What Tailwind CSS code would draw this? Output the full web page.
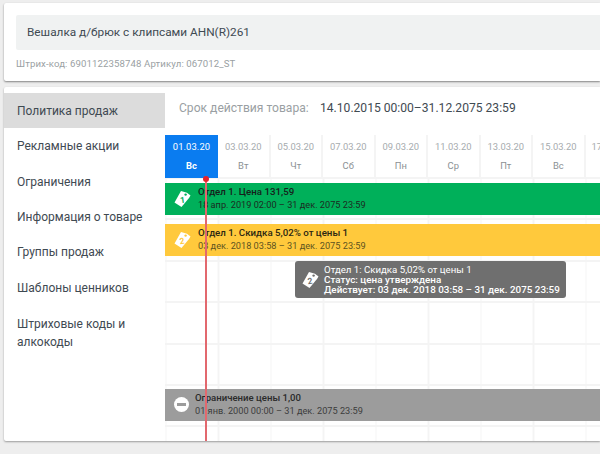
<!DOCTYPE html>
<html lang="ru"><head><meta charset="utf-8">
<script src="https://cdn.jsdelivr.net/npm/@tailwindcss/browser@4"></script>
</head>
<body class="m-0 w-[600px] h-[454px] overflow-hidden bg-[#eeeeee] font-['Roboto',sans-serif] text-[#3f4a52]">
<div class="pl-[4px] pt-[3px]">
  <section class="h-[78px] bg-white rounded-l-[2px] shadow-[0_1px_2px_rgba(0,0,0,0.45)] pl-[12px] pt-[12px]">
    <div class="h-[35px] bg-[#f0f2f2] pl-[11px] flex items-center text-[11.8px] rounded-l-[2px]">Вешалка д/брюк с клипсами AHN(R)261</div>
    <div class="mt-[7px] text-[9.65px] leading-[14px] text-[#9a9fa3] tracking-[0.1px]">Штрих-код: 6901122358748 Артикул: 067012_ST</div>
  </section>
  <section class="mt-[6px] h-[354px] bg-white rounded-l-[2px] shadow-[0_1px_2px_rgba(0,0,0,0.35)] flex">
    <nav class="w-[161px] shrink-0 pt-[6px] text-[12px]">
      <div class="h-[35px] bg-[#dcdcdc] pl-[13px] flex items-center">Политика продаж</div>
      <div class="h-[36px] pl-[13px] flex items-center">Рекламные акции</div>
      <div class="h-[35.4px] pl-[13px] flex items-center">Ограничения</div>
      <div class="h-[35.4px] pl-[13px] flex items-center">Информация о товаре</div>
      <div class="h-[35.4px] pl-[13px] flex items-center">Группы продаж</div>
      <div class="h-[35.4px] pl-[13px] flex items-center">Шаблоны ценников</div>
      <div class="pl-[13px] pt-[9px] leading-[18px] pr-[20px]">Штриховые коды и алкокоды</div>
    </nav>
    <main class="relative flex-1 min-w-0 overflow-hidden">
      <div class="h-[48px] flex items-center pl-[14px] pb-[6px] text-[12.1px]">
        <span class="text-[#9a9fa3] w-[141px]">Срок действия товара:</span>
        <span class="text-[#3f4a52]">14.10.2015 00:00–31.12.2075 23:59</span>
      </div>
      <div class="h-[44px] flex text-center text-[9.4px] text-[#a6abae] w-[600px] border-b-2 border-[#f4f4f4]">
        <div class="w-[53px] shrink-0 h-[43px] bg-[#0a7cf0] text-white"><div class="pt-[5px] leading-[14px] tracking-[0.1px]">01.03.20</div><div class="mt-[5px] leading-[14px] font-bold">Вс</div></div>
        <div class="w-[52.5px] shrink-0 border-r-2 border-[#f4f4f4]"><div class="pt-[5px] leading-[14px]">03.03.20</div><div class="mt-[5px] leading-[14px] text-[#8b9094]">Вт</div></div>
        <div class="w-[52.5px] shrink-0 border-r-2 border-[#f4f4f4]"><div class="pt-[5px] leading-[14px]">05.03.20</div><div class="mt-[5px] leading-[14px] text-[#8b9094]">Чт</div></div>
        <div class="w-[52.5px] shrink-0 border-r-2 border-[#f4f4f4]"><div class="pt-[5px] leading-[14px]">07.03.20</div><div class="mt-[5px] leading-[14px] text-[#8b9094]">Сб</div></div>
        <div class="w-[52.5px] shrink-0 border-r-2 border-[#f4f4f4]"><div class="pt-[5px] leading-[14px]">09.03.20</div><div class="mt-[5px] leading-[14px] text-[#8b9094]">Пн</div></div>
        <div class="w-[52.5px] shrink-0 border-r-2 border-[#f4f4f4]"><div class="pt-[5px] leading-[14px]">11.03.20</div><div class="mt-[5px] leading-[14px] text-[#8b9094]">Ср</div></div>
        <div class="w-[52.5px] shrink-0 border-r-2 border-[#f4f4f4]"><div class="pt-[5px] leading-[14px]">13.03.20</div><div class="mt-[5px] leading-[14px] text-[#8b9094]">Пт</div></div>
        <div class="w-[52.5px] shrink-0 border-r-2 border-[#f4f4f4]"><div class="pt-[5px] leading-[14px]">15.03.20</div><div class="mt-[5px] leading-[14px] text-[#8b9094]">Вс</div></div>
        <div class="w-[52.5px] shrink-0 text-left pl-[6px]"><div class="pt-[5px] leading-[14px]">17.03.20</div></div>
      </div>
      <div class="h-[262px] bg-[repeating-linear-gradient(90deg,#f4f4f4_0,#f4f4f4_1.5px,transparent_1.5px,transparent_52.5px)] bg-[position:0.5px_0]">
        <div class="h-[41.4px] pt-[3.5px] border-b-2 border-[#f4f4f4]">
          <div class="h-[32px] bg-[#00b05a] flex items-center text-[9.2px] leading-[12.5px] text-[#1c2b22]">
            <svg class="ml-[9px] w-[17px] h-[18px] shrink-0" viewBox="0 0 17 18"><path fill="#fff" d="M7 1 13 2.8 16.5 5.5 15 8 7.5 17 .5 12.5Z"/><circle cx="11.6" cy="4.6" r="1.2" fill="#00b05a"/><text x="8.5" y="13" text-anchor="middle" font-size="8.5" font-weight="700" fill="#00b05a" transform="rotate(-8 8 10)">1</text></svg>
            <div class="ml-[7px] whitespace-nowrap"><div class="text-[9.7px] font-medium text-[#16201b]">Отдел 1. Цена 131,59</div><div>18 апр. 2019 02:00 – 31 дек. 2075 23:59</div></div>
          </div>
        </div>
        <div class="h-[41.4px] pt-[3.6px] border-b-2 border-[#f4f4f4]">
          <div class="h-[32px] bg-[#ffc93c] flex items-center text-[9.2px] leading-[12.5px] text-[#5d5320]">
            <svg class="ml-[9px] w-[17px] h-[18px] shrink-0" viewBox="0 0 17 18"><path fill="#fff" d="M7 1 13 2.8 16.5 5.5 15 8 7.5 17 .5 12.5Z"/><circle cx="11.6" cy="4.6" r="1.2" fill="#ffc93c"/><text x="8" y="13" text-anchor="middle" font-size="8.5" font-weight="700" fill="#ffc93c" transform="rotate(-8 8 10)">2</text></svg>
            <div class="ml-[7px] whitespace-nowrap"><div class="text-[9.7px] font-medium text-[#2b2712]">Отдел 1. Скидка 5,02% от цены 1</div><div>03 дек. 2018 03:58 – 31 дек. 2075 23:59</div></div>
          </div>
        </div>
        <div class="h-[41.4px] border-b-2 border-[#f4f4f4]"></div>
        <div class="h-[41.4px] border-b-2 border-[#f4f4f4]"></div>
        <div class="h-[41.4px] border-b-2 border-[#f4f4f4]"></div>
        <div class="h-[41.4px] pt-[3px] border-b-2 border-[#f4f4f4]">
          <div class="h-[32px] bg-[#9c9c9c] flex items-center text-[9.2px] leading-[12.5px] text-[#3d3d3d]">
            <svg class="ml-[9px] w-[15px] h-[15px] shrink-0" viewBox="0 0 15 15"><circle cx="7.5" cy="7.5" r="7.5" fill="#fff"/><rect x="3" y="6" width="9" height="3" fill="#9c9c9c"/></svg>
            <div class="ml-[6px] whitespace-nowrap"><div class="text-[9.6px] font-medium text-[#2a2a2a]">Ограничение цены 1,00</div><div>01 янв. 2000 00:00 – 31 дек. 2075 23:59</div></div>
          </div>
        </div>
      </div>
      <div class="absolute left-[130px] top-[174px] w-[271px] h-[37px] bg-[#6f6f6f] rounded-[3px] flex items-center text-[9.85px] leading-[10px] text-white">
        <svg class="ml-[7px] w-[17px] h-[18px] shrink-0" viewBox="0 0 17 18"><path fill="#fff" d="M7 1 13 2.8 16.5 5.5 15 8 7.5 17 .5 12.5Z"/><circle cx="11.6" cy="4.6" r="1.2" fill="#6f6f6f"/><text x="8" y="13" text-anchor="middle" font-size="8.5" font-weight="700" fill="#6f6f6f" transform="rotate(-8 8 10)">2</text></svg>
        <div class="ml-[5px] whitespace-nowrap"><div class="text-[9.66px]">Отдел 1: Скидка 5,02% от цены 1</div><div class="font-medium">Статус: цена утверждена</div><div class="font-medium">Действует: 03 дек. 2018 03:58 – 31 дек. 2075 23:59</div></div>
      </div>
      <div class="absolute left-[40px] top-[90px] bottom-0 w-[2px] bg-[#e2686e]"></div>
      <div class="absolute left-[38px] top-[88.5px] w-[6px] h-[6px] rounded-full bg-[#e8202a]"></div>
    </main>
  </section>
</div>
</body></html>
